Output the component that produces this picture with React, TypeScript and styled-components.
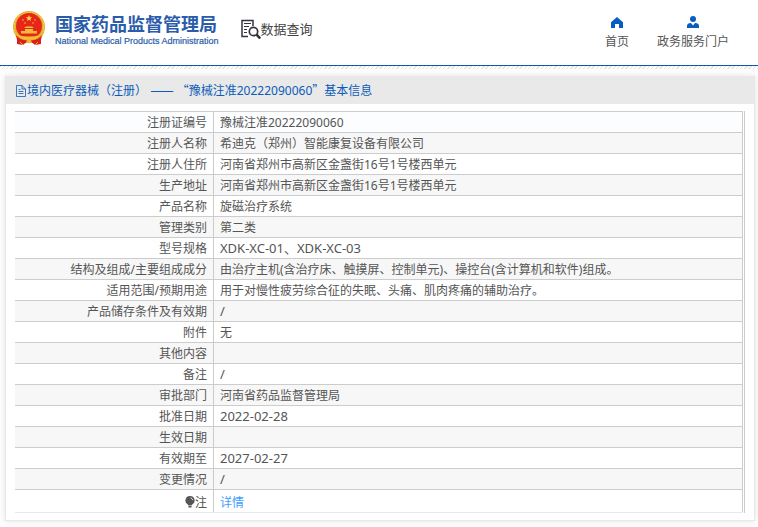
import React from "react";
import styled, { createGlobalStyle } from "styled-components";

const GlobalStyle = createGlobalStyle`
  * { box-sizing: border-box; }
  body {
    margin: 0;
    background: #fdfdfd;
    color: #555;
    font: 12px/20px "Noto Sans", "Noto Sans CJK SC", sans-serif;
  }
`;

const Header = styled.header`
  display: flex;
  align-items: flex-start;
  height: 66px;
  padding: 10px 29px 0 12px;
  background: #fff;
  border-bottom: 1px solid #0a57ae;
`;

const Brand = styled.a`
  display: flex;
  gap: 9px;
  color: #2b5cab;
  text-decoration: none;
`;

const BrandText = styled.span`
  display: flex;
  flex-direction: column;
`;

const BrandName = styled.strong`
  font: 700 18px/26px "Noto Sans CJK SC", sans-serif;
`;

const BrandEnglish = styled.span`
  font: 9px/10px "Liberation Sans", sans-serif;
  -webkit-text-stroke: 0.2px currentColor;
  white-space: nowrap;
`;

const Section = styled.h1`
  display: flex;
  align-items: center;
  margin: 8px 0 0 22px;
  color: #444;
  font: 400 13px/22px "Noto Sans CJK SC", sans-serif;
`;

const Nav = styled.nav`
  display: flex;
  gap: 28px;
  margin-left: auto;
  padding-top: 6px;
`;

const NavLink = styled.a`
  display: flex;
  flex-direction: column;
  align-items: center;
  gap: 3px;
  color: #555;
  text-decoration: none;
  white-space: nowrap;
`;

const Hatch = styled.div`
  height: 3px;
  background: repeating-linear-gradient(135deg, #e4e4e4 0 1px, #fdfdfd 1px 3px);
`;

const Card = styled.main`
  margin: 7px 3px 6px 5px;
  background: #fff;
  border: 1px solid #e8e8e8;
  box-shadow: 0 0 6px rgba(0, 0, 0, 0.1);
`;

const CardTitle = styled.h2`
  display: flex;
  align-items: center;
  height: 27px;
  margin: 0;
  padding: 0 9px;
  background: #e9e9e9;
  color: #0b5cb8;
  font-size: 12px;
  font-weight: 400;
  white-space: pre;
`;

const Wide = styled.span`
  font-family: "Noto Sans CJK SC", sans-serif;
`;

const Dash = styled(Wide)`
  font-size: 14px;
  line-height: 1;
`;

const TableFrame = styled.div`
  margin: 7px 9px;
  padding-right: 1px;
  border-right: 1px solid #ccc;
`;

const Table = styled.table`
  width: 100%;
  table-layout: fixed;
  border-spacing: 0;
  border-bottom: 1px solid #e8e8f4;
`;

const Row = styled.tr<{ $shade: string }>`
  background: ${(p) => p.$shade};
`;

const Label = styled.th<{ $tall?: boolean }>`
  width: 199px;
  height: ${(p) => (p.$tall ? 23 : 21)}px;
  padding: ${(p) => (p.$tall ? 3 : 2)}px 6px 0 0;
  border-top: 1px solid #ccc;
  border-right: 1px solid #ccc;
  font-weight: 400;
  line-height: 18px;
  text-align: right;
`;

const Value = styled.td<{ $tall?: boolean; $code?: boolean }>`
  padding: ${(p) => (p.$tall ? 4 : p.$code ? 0 : 2)}px 6px 0;
  border-top: 1px solid #ccc;
  border-right: 1px solid #ccc;
  font-size: ${(p) => (p.$code ? 13 : 12)}px;
  line-height: 18px;
`;

const DetailLink = styled.a`
  color: #409eff;
  text-decoration: none;
`;

const BulbIcon = styled.svg`
  vertical-align: -1px;
`;

const rows: [string, string][] = [
  ["注册证编号", "豫械注准20222090060"],
  ["注册人名称", "希迪克（郑州）智能康复设备有限公司"],
  ["注册人住所", "河南省郑州市高新区金盏街16号1号楼西单元"],
  ["生产地址", "河南省郑州市高新区金盏街16号1号楼西单元"],
  ["产品名称", "旋磁治疗系统"],
  ["管理类别", "第二类"],
  ["型号规格", "XDK-XC-01、XDK-XC-03"],
  ["结构及组成/主要组成成分", "由治疗主机(含治疗床、触摸屏、控制单元)、操控台(含计算机和软件)组成。"],
  ["适用范围/预期用途", "用于对慢性疲劳综合征的失眠、头痛、肌肉疼痛的辅助治疗。"],
  ["产品储存条件及有效期", "/"],
  ["附件", "无"],
  ["其他内容", ""],
  ["备注", "/"],
  ["审批部门", "河南省药品监督管理局"],
  ["批准日期", "2022-02-28"],
  ["生效日期", ""],
  ["有效期至", "2027-02-27"],
  ["变更情况", "/"],
];

const shade = (i: number) => (i === 0 ? "#fcfdff" : i % 2 ? "#f7f7f7" : "#fff");
const isCode = (value: string) => /^[\w\-\/、]+$/.test(value);

function Emblem() {
  return (
    <svg width="34" height="36" viewBox="0 0 34 36" aria-hidden="true">
      <path d="M5 25 5 34 11 35 14 32 20 32 23 35 29 34 29 25Z" fill="#dc2018" />
      <circle cx="17" cy="17" r="16" fill="#e8ad2d" />
      <circle cx="17" cy="17" r="14.7" fill="none" stroke="#f4cf52" strokeWidth="1" strokeDasharray="2 1" />
      <circle cx="17" cy="16" r="13" fill="#e52619" />
      <path d="m17 5 .9 2.2 2.4.1-1.9 1.5.7 2.3-2.1-1.3-2.1 1.3.7-2.3-1.9-1.5 2.4-.1Z" fill="#f7d34a" />
      <g fill="#f3bd38">
        <circle cx="11" cy="10" r=".8" /><circle cx="23" cy="10" r=".8" />
        <circle cx="13" cy="13" r=".8" /><circle cx="21" cy="13" r=".8" />
        <path d="M12 18 14 16.5H20L22 18ZM13 19H21V21H25V23.5H9V21H13Z" />
        <path d="M6 25Q17 28 28 25L26 28Q17 31 8 28Z" />
      </g>
      <path d="M4 25Q9 31 15 30L14 33Q8 34 5 30ZM30 25Q25 31 19 30L20 33Q26 34 29 30Z" fill="#dc2018" />
      <circle cx="17" cy="31" r="2.3" fill="#efb62f" />
      <path d="m8 32 3 3M26 32l-3 3" stroke="#edbd37" strokeWidth="1" />
    </svg>
  );
}

function QueryIcon() {
  return (
    <svg width="20" height="20" viewBox="0 0 20 20" fill="none" stroke="#33333f" aria-hidden="true">
      <path d="M7 17.5H1V1.5H12V7" strokeWidth="1.5" />
      <path d="M3 4.5h7M3 7.5h5M3 10.5h3M3 13.5h3" strokeWidth="1.2" />
      <circle cx="12.5" cy="12.5" r="4.2" strokeWidth="1.7" />
      <path d="m15.6 15.7 3.6 3.8" strokeWidth="2.5" />
    </svg>
  );
}

function HomeIcon() {
  return (
    <svg width="12" height="13" viewBox="0 0 12 13" aria-hidden="true">
      <path d="M6 1 0 6.3V12H4V8H8V12H12V6.3Z" fill="#0a5dc0" />
    </svg>
  );
}

function UserIcon() {
  return (
    <svg width="12" height="13" viewBox="0 0 12 13" fill="#0a5dc0" aria-hidden="true">
      <circle cx="6" cy="3" r="3" />
      <path d="M0 12V10Q0 7 4 7L6 9.5 8 7Q12 7 12 10V12Z" />
    </svg>
  );
}

function FileIcon() {
  return (
    <svg width="12" height="12" viewBox="0 0 12 12" fill="none" stroke="#0b5cb8" aria-hidden="true">
      <path d="M1.5.5H7L10.5 4V11.5H1.5ZM7 .5V4H10.5M3.5 6.5H8.5M3.5 8.5H8.5M3.5 4.5H5.5" strokeWidth=".8" />
    </svg>
  );
}

export default function App() {
  return (
    <>
      <GlobalStyle />
      <Header>
        <Brand href="#">
          <Emblem />
          <BrandText>
            <BrandName>国家药品监督管理局</BrandName>
            <BrandEnglish>National Medical Products Administration</BrandEnglish>
          </BrandText>
        </Brand>
        <Section>
          <QueryIcon />
          数据查询
        </Section>
        <Nav>
          <NavLink href="#"><HomeIcon />首页</NavLink>
          <NavLink href="#"><UserIcon />政务服务门户</NavLink>
        </Nav>
      </Header>
      <Hatch />
      <Card>
        <CardTitle>
          <FileIcon />
          <span>
            境内医疗器械（注册） <Dash>——</Dash> <Wide>“</Wide>豫械注准20222090060<Wide>”</Wide>基本信息
          </span>
        </CardTitle>
        <TableFrame>
          <Table>
            <tbody>
              {rows.map(([label, value], i) => (
                <Row key={label} $shade={shade(i)}>
                  <Label scope="row">{label}</Label>
                  <Value $code={isCode(value)}>{value}</Value>
                </Row>
              ))}
              <Row $shade="#fff">
                <Label scope="row" $tall>
                  <BulbIcon width="10" height="12" viewBox="0 0 10 12" aria-hidden="true">
                    <path d="M5 0a4.5 4.5 0 0 1 2.5 8.3L6.5 9.5h-3l-1-1.2A4.5 4.5 0 0 1 5 0ZM3.5 10h3v1.5h-3Z" fill="#555" />
                    <path d="M5.5 1.8Q7.3 2.2 7.8 4.2" fill="none" stroke="#fff" strokeWidth=".8" />
                  </BulbIcon>
                  注
                </Label>
                <Value $tall><DetailLink href="#">详情</DetailLink></Value>
              </Row>
            </tbody>
          </Table>
        </TableFrame>
      </Card>
    </>
  );
}
